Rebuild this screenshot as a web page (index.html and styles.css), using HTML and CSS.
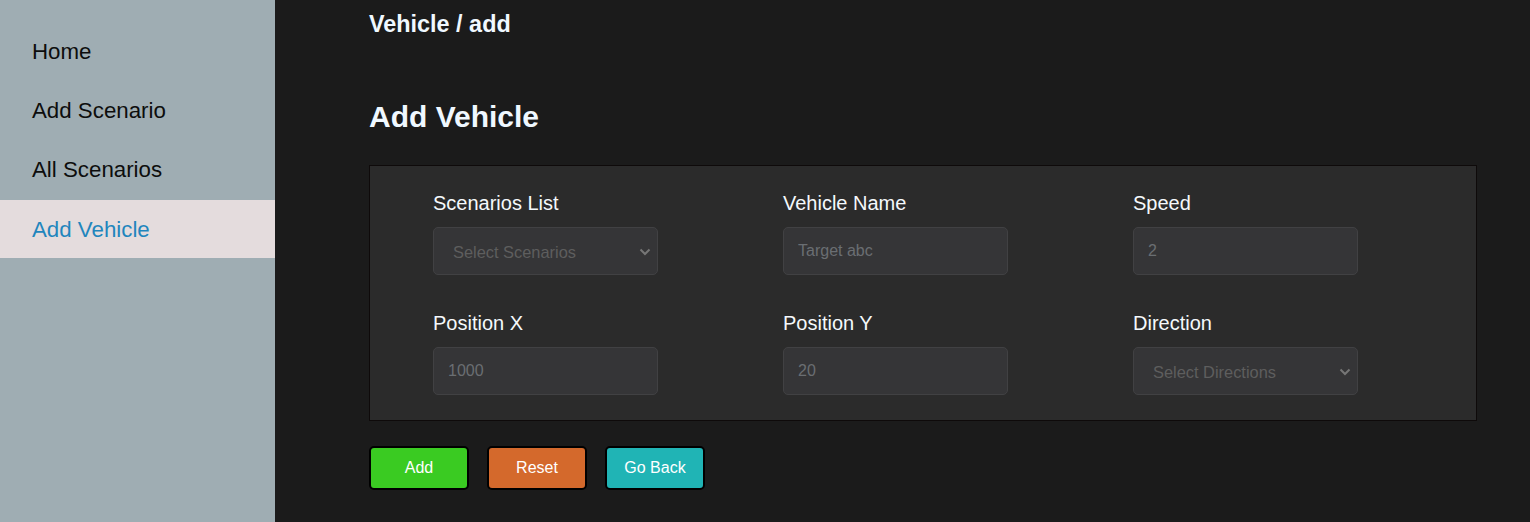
FILE: index.html
```html
<!DOCTYPE html>
<html lang="en">
<head>
<meta charset="utf-8">
<title>Add Vehicle</title>
<link rel="stylesheet" href="styles.css">
</head>
<body>
<div class="layout">
  <aside class="sidebar">
    <nav class="nav">
      <a class="nav-item" href="#">Home</a>
      <a class="nav-item" href="#">Add Scenario</a>
      <a class="nav-item" href="#">All Scenarios</a>
      <a class="nav-item active" href="#">Add Vehicle</a>
    </nav>
  </aside>
  <main class="main">
    <div class="breadcrumb">Vehicle / add</div>
    <h1 class="title">Add Vehicle</h1>
    <form class="form-box">
      <div class="field">
        <label class="label">Scenarios List</label>
        <div class="select-wrap">
          <select class="control select">
            <option>Select Scenarios</option>
          </select>
          <svg class="chevron" width="12" height="8" viewBox="0 0 12 8" aria-hidden="true"><polyline points="1.5,1.5 6,6 10.5,1.5" fill="none" stroke="#767676" stroke-width="2"/></svg>
        </div>
      </div>
      <div class="field">
        <label class="label">Vehicle Name</label>
        <input class="control" type="text" placeholder="Target abc">
      </div>
      <div class="field">
        <label class="label">Speed</label>
        <input class="control" type="text" placeholder="2">
      </div>
      <div class="field">
        <label class="label">Position X</label>
        <input class="control" type="text" placeholder="1000">
      </div>
      <div class="field">
        <label class="label">Position Y</label>
        <input class="control" type="text" placeholder="20">
      </div>
      <div class="field">
        <label class="label">Direction</label>
        <div class="select-wrap">
          <select class="control select">
            <option>Select Directions</option>
          </select>
          <svg class="chevron" width="12" height="8" viewBox="0 0 12 8" aria-hidden="true"><polyline points="1.5,1.5 6,6 10.5,1.5" fill="none" stroke="#767676" stroke-width="2"/></svg>
        </div>
      </div>
    </form>
    <div class="actions">
      <button class="btn btn-add" type="button">Add</button>
      <button class="btn btn-reset" type="button">Reset</button>
      <button class="btn btn-back" type="button">Go Back</button>
    </div>
  </main>
</div>
</body>
</html>
```
FILE: styles.css
```css
* { box-sizing: border-box; }
html, body { margin: 0; height: 100%; }
body {
  font-family: "Liberation Sans", Arial, sans-serif;
  background: #1b1b1b;
}
.layout {
  display: flex;
  min-height: 522px;
}
.sidebar {
  width: 275px;
  flex: 0 0 275px;
  background: #9fadb3;
  padding-top: 22.5px;
}
.nav {
  display: flex;
  flex-direction: column;
}
.nav-item {
  display: block;
  font-size: 22.3px;
  line-height: 25px;
  padding: 16.5px 32px 17.5px 32px;
  color: #0d0d0d;
  text-decoration: none;
}
.nav-item.active {
  background: #e4dcdd;
  color: #1f86bd;
  padding-top: 17px;
  padding-bottom: 16px;
}
.main {
  flex: 1;
  padding: 11px 53px 0 94px;
  background: #1b1b1b;
}
.breadcrumb {
  font-size: 23.4px;
  font-weight: bold;
  color: #f0f8ff;
}
.title {
  margin: 62px 0 0 0;
  font-size: 30px;
  font-weight: bold;
  line-height: 33.5px;
  color: #f0f8ff;
}
.form-box {
  margin-top: 31px;
  background: #2b2b2b;
  border: 1px solid #0e0a0a;
  padding: 26px 63px 25px 63px;
  display: grid;
  grid-template-columns: repeat(3, 225px);
  column-gap: 125px;
  row-gap: 37px;
}
.field {
  display: flex;
  flex-direction: column;
}
.label {
  font-size: 20px;
  line-height: 22px;
  color: #f5f9fc;
  margin-bottom: 13px;
}
.control {
  width: 225px;
  height: 48px;
  background: #353537;
  border: 1px solid #414143;
  border-radius: 5px;
  color: #6a6e72;
  font-family: "Liberation Sans", Arial, sans-serif;
  font-size: 16px;
  padding: 0 14px;
  outline: none;
}
.control::placeholder {
  color: #6a6e72;
}
.select-wrap {
  position: relative;
  width: 225px;
}
.select {
  appearance: none;
  -webkit-appearance: none;
  display: block;
  padding: 0 30px 0 19px;
  font-size: 16.4px;
  color: #5e5e5e;
  line-height: 48px;
}
.chevron {
  position: absolute;
  right: 7px;
  top: 21px;
  pointer-events: none;
}
.actions {
  display: flex;
  gap: 18px;
  margin-top: 25px;
}
.btn {
  width: 100px;
  height: 44px;
  border: 2px solid #000;
  border-radius: 5px;
  color: #fff;
  font-family: "Liberation Sans", Arial, sans-serif;
  font-size: 16px;
  cursor: pointer;
}
.btn-add { background: #3acb22; }
.btn-reset { background: #d4692c; }
.btn-back { background: #20b4b5; }
```
